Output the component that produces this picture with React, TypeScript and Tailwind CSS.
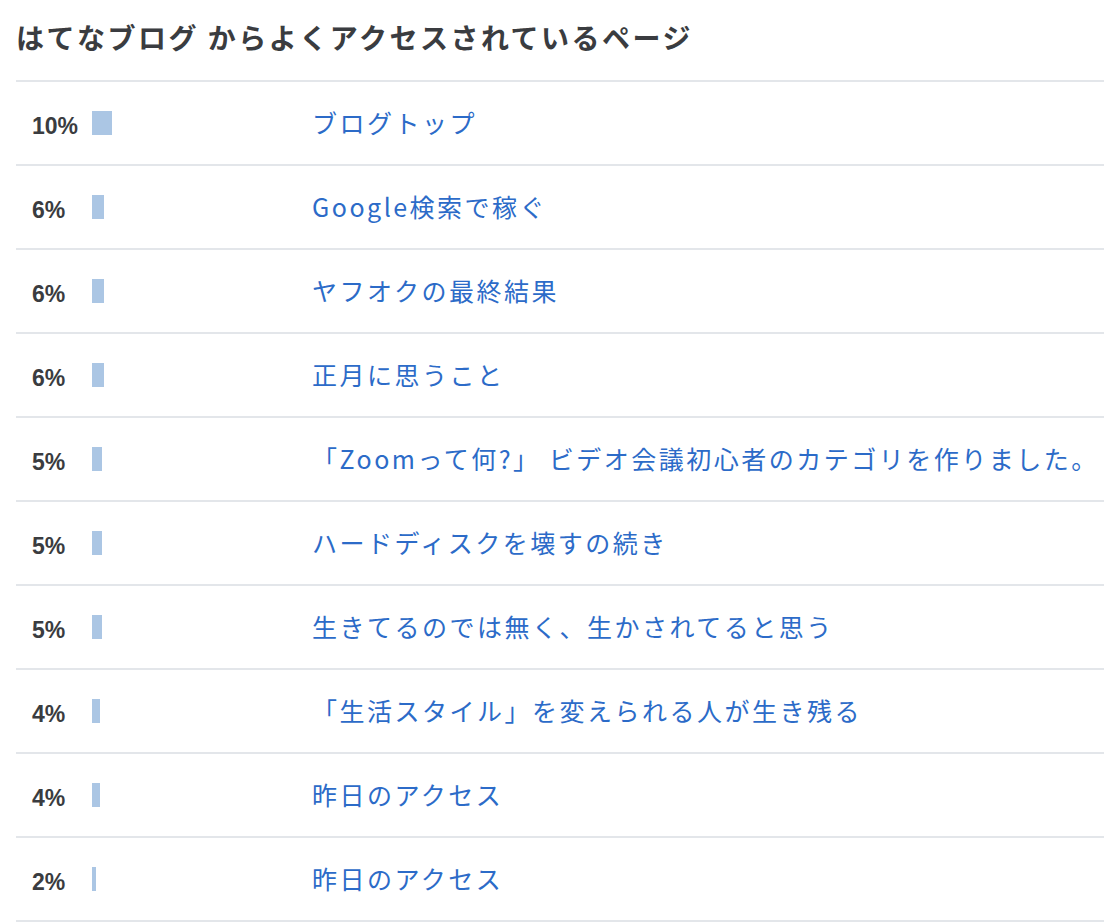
const ROWS: { pct: number; title: string }[] = [
  { pct: 10, title: 'ブログトップ' },
  { pct: 6, title: 'Google検索で稼ぐ' },
  { pct: 6, title: 'ヤフオクの最終結果' },
  { pct: 6, title: '正月に思うこと' },
  { pct: 5, title: '「Zoomって何?」 ビデオ会議初心者のカテゴリを作りました。' },
  { pct: 5, title: 'ハードディスクを壊すの続き' },
  { pct: 5, title: '生きてるのでは無く、生かされてると思う' },
  { pct: 4, title: '「生活スタイル」を変えられる人が生き残る' },
  { pct: 4, title: '昨日のアクセス' },
  { pct: 2, title: '昨日のアクセス' },
];

export default function App() {
  return (
    <div
      className="w-[1104px] h-[922px] bg-white pl-4 overflow-hidden"
      style={{ fontFamily: '"Noto Sans CJK JP", "Noto Sans", sans-serif' }}
    >
      {/* 見出し */}
      <h2 className="h-[80px] flex items-center text-[28px] font-bold tracking-[2.5px] text-[#3a3c40] pb-[6px]">
        はてなブログ からよくアクセスされているページ
      </h2>

      <ul className="border-t-2 border-[#e3e6ea]">
        {ROWS.map((r, i) => (
          <li key={i} className="h-[84px] flex items-center border-b-2 border-[#e3e6ea]">
            <div className="w-[296px] shrink-0 flex items-center pl-4">
              <span
                className="w-[60px] text-[23px] font-bold text-[#3a3c40] pt-[6px]"
                style={{ fontFamily: '"Liberation Sans", Arial, sans-serif' }}
              >
                {r.pct}%
              </span>
              <span className="h-[24px] bg-[#abc6e4]" style={{ width: r.pct * 2 }} />
            </div>
            <a className="text-[25px] tracking-[2.5px] text-[#2c6bc8] whitespace-nowrap">{r.title}</a>
          </li>
        ))}
      </ul>
    </div>
  );
}
